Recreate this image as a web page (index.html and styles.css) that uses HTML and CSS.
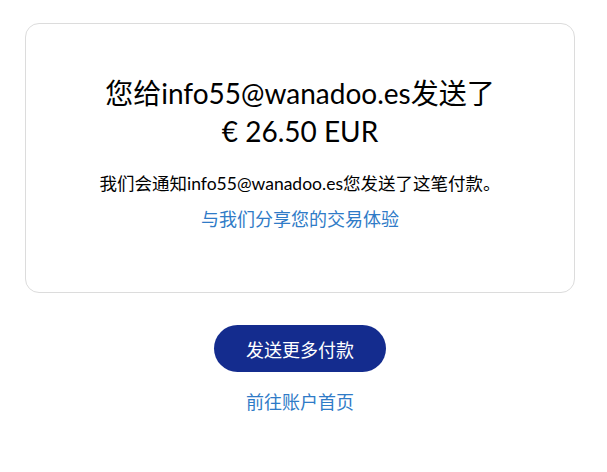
FILE: index.html
```html
<!DOCTYPE html>
<html lang="zh-CN">
<head>
    <meta charset="UTF-8">
    <meta name="viewport" content="width=device-width, initial-scale=1.0">
    <title>付款已发送</title>
    <link rel="stylesheet" href="styles.css">
</head>
<body>
    <div class="page">
        <!-- 付款结果卡片 -->
        <div class="card">
            <h1 class="title">您给info55@wanadoo.es发送了<br>€ 26.50 EUR</h1>
            <p class="notice">我们会通知info55@wanadoo.es您发送了这笔付款。</p>
            <a class="link" href="#">与我们分享您的交易体验</a>
        </div>

        <!-- 操作 -->
        <div class="actions">
            <button class="button-primary">发送更多付款</button>
            <a class="link" href="#">前往账户首页</a>
        </div>
    </div>
</body>
</html>
```

FILE: styles.css
```css
body {
    margin: 0;
    font-family: Lato, "Noto Sans CJK SC", sans-serif;
    background-color: #ffffff;
    color: #000000;
}

.page {
    padding: 23px 32px 0 25px;
    display: flex;
    flex-direction: column;
    align-items: center;
}

.card {
    box-sizing: border-box;
    width: 550px;
    height: 270px;
    border: 1px solid #dcdcdc;
    border-radius: 14px;
    display: flex;
    flex-direction: column;
    align-items: center;
    padding-top: 50px;
}

.title {
    margin: 0;
    font-size: 28px;
    font-weight: 400;
    line-height: 38px;
    text-align: center;
}

.notice {
    margin: 22px 0 0;
    font-size: 17.5px;
    line-height: 24px;
}

.link {
    color: #2f7bc7;
    text-decoration: none;
    font-size: 18px;
    line-height: 24px;
}

.card .link {
    margin-top: 11px;
}

.actions {
    display: flex;
    flex-direction: column;
    align-items: center;
    gap: 18px;
    margin-top: 32px;
}

.button-primary {
    width: 172px;
    height: 47px;
    border: none;
    border-radius: 24px;
    background-color: #142c8e;
    color: #ffffff;
    font-family: inherit;
    font-size: 18px;
    cursor: pointer;
}
```
